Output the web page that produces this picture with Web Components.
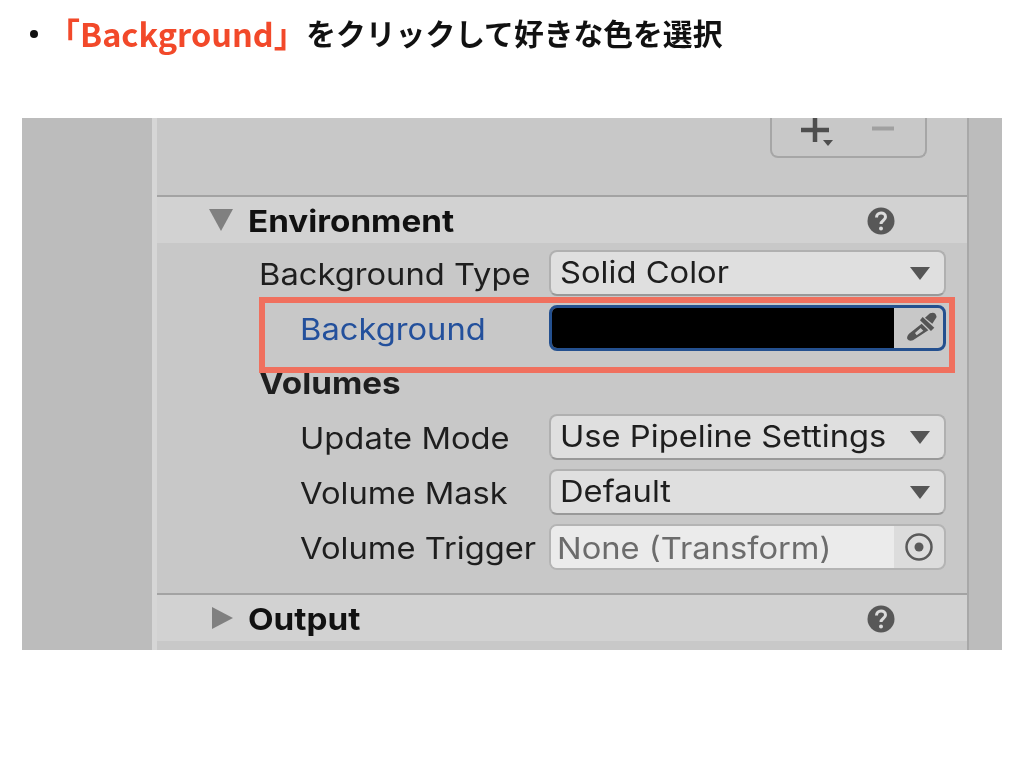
<!DOCTYPE html>
<html lang="ja">
<head>
<meta charset="utf-8">
<title>Background</title>
<style>
  html, body { margin: 0; background: #fff; }
  body { width: 1024px; height: 768px; overflow: hidden; }
</style>
</head>
<body>
<bullet-note><em>「Background」</em>をクリックして好きな色を選択</bullet-note>
<inspector-shot>
  <list-buttons slot="top"></list-buttons>
  <fold-header open>Environment</fold-header>
  <field-list>
    <field-row label="Background Type"><popup-field>Solid Color</popup-field></field-row>
    <field-row label="Background" indent accent><color-field></color-field></field-row>
    <field-row label="Volumes" strong></field-row>
    <field-row label="Update Mode" indent><popup-field>Use Pipeline Settings</popup-field></field-row>
    <field-row label="Volume Mask" indent><popup-field>Default</popup-field></field-row>
    <field-row label="Volume Trigger" indent><object-field>None (Transform)</object-field></field-row>
    <red-outline></red-outline>
  </field-list>
  <fold-header>Output</fold-header>
</inspector-shot>

<script>
const FONT = '"Inter", "Liberation Sans", sans-serif';
// the reference is a screenshot stretched sideways, so its text is wider than tall
const STRETCH = 'display: inline-block; transform: scaleX(1.09); transform-origin: 0 50%; white-space: nowrap;';

function define(name, html) {
  customElements.define(name, class extends HTMLElement {
    connectedCallback() {
      if (this.shadowRoot) return;
      this.attachShadow({ mode: 'open' }).innerHTML = typeof html === 'function' ? html(this) : html;
    }
  });
}

define('bullet-note', `
  <style>
    :host {
      display: flex;
      align-items: center;
      height: 66px;
      padding-left: 30px;
      font: 700 29.800px/1 "Noto Sans CJK JP", "Liberation Sans", sans-serif;
      color: #111;
      filter: blur(.45px);
    }
    .dot { width: 8px; height: 8px; border-radius: 50%; background: #111; margin-right: 9.500px; margin-top: 2px; }
    ::slotted(em) { font-style: normal; font-size: 32.500px; color: #f2492a; }
  </style>
  <span class="dot"></span><slot></slot>`);

define('inspector-shot', `
  <style>
    :host {
      display: grid;
      grid-template-columns: 130px 5px 810px 2px 33px;
      width: 980px;
      height: 532px;
      margin: 52px 0 0 22px;
      background: #c8c8c8;
      overflow: hidden;
      font-family: ${FONT};
      filter: blur(.6px);
    }
    .gutter { background: #bcbcbc; }
    .edge { background: #d6d6d6; }
    .rule { background: #a8a8a8; }
    .main { display: flex; flex-direction: column; min-width: 0; }
    .top { height: 77px; display: flex; justify-content: flex-end; padding-right: 40px; box-sizing: border-box; }
  </style>
  <div class="gutter"></div>
  <div class="edge"></div>
  <div class="main">
    <div class="top"><slot name="top"></slot></div>
    <slot></slot>
  </div>
  <div class="rule"></div>
  <div class="gutter"></div>`);

define('list-buttons', `
  <style>
    :host {
      display: block;
      width: 157px;
      height: 40px;
      box-sizing: border-box;
      border: 2px solid #a6a6a6;
      border-top: 0;
      border-radius: 0 0 8px 8px;
    }
    svg { display: block; }
  </style>
  <svg width="153" height="38" viewBox="0 0 153 38">
    <path d="M29 12h28M43 0v24" stroke="#4e4e4e" stroke-width="4.500" fill="none"/>
    <path d="M51 22h10l-5 6z" fill="#4e4e4e"/>
    <path d="M100 10.500h22" stroke="#a0a0a0" stroke-width="4" fill="none"/>
  </svg>`);

define('fold-header', (el) => `
  <style>
    :host {
      display: flex;
      align-items: center;
      height: 48px;
      box-sizing: border-box;
      border-top: 2px solid #a3a3a3;
      background: #d2d2d2;
      padding: 0 72px 0 52px;
      font: 700 30.500px/1 ${FONT};
      color: #111;
    }
    .arrow { width: 39px; flex: none; display: block; }
    .label { flex: 1; min-width: 0; margin-top: 2px; }
    .label span { ${STRETCH} }
    .help { width: 28px; height: 28px; flex: none; display: block; margin-top: 2px; }
  </style>
  <svg class="arrow" width="39" height="24" viewBox="0 0 39 24">
    ${el.hasAttribute('open')
      ? '<path d="M0 1h24L12 23z" fill="#808080"/>'
      : '<path d="M3 1l21 11L3 23z" fill="#808080"/>'}
  </svg>
  <div class="label"><span><slot></slot></span></div>
  <svg class="help" viewBox="0 0 28 28">
    <circle cx="14" cy="14" r="13.500" fill="#585858"/>
    <path d="M9.500 10.500c0-6 9-6 9-.5 0 3.500-4.500 3.500-4.500 7" fill="none" stroke="#dcdcdc" stroke-width="3"/>
    <circle cx="14" cy="21.500" r="2" fill="#dcdcdc"/>
  </svg>`);

define('field-list', `
  <style>
    :host {
      display: flex;
      flex-direction: column;
      gap: 8.800px;
      position: relative;
      height: 350px;
      box-sizing: border-box;
      padding: 7px 21px 0 0;
    }
  </style>
  <slot></slot>`);

define('field-row', (el) => `
  <style>
    :host {
      display: grid;
      grid-template-columns: 392px 397px;
      height: 46px;
      align-items: center;
      font: ${el.hasAttribute('strong') ? 700 : 400} ${el.hasAttribute('strong') ? 30.5 : 30}px/1 ${FONT};
      color: ${el.hasAttribute('accent') ? '#23509c' : '#1e1e1e'};
    }
    .label { padding-left: ${el.hasAttribute('indent') ? 143 : 102}px; margin-top: 2px; }
    .label span { ${STRETCH} }
  </style>
  <div class="label"><span>${el.getAttribute('label')}</span></div><slot></slot>`);

const controlBox = `
  display: flex;
  align-items: center;
  height: 46px;
  box-sizing: border-box;
  border-radius: 8px;
  overflow: hidden;
  color: #1e1e1e;`;

define('popup-field', `
  <style>
    :host {${controlBox}
      background: #dfdfdf;
      border: 2px solid #b0b0b0;
      border-bottom-color: #999;
      padding: 0 14px 0 9px;
      justify-content: space-between;
    }
    .text { ${STRETCH} margin-top: -2px; }
    svg { display: block; flex: none; }
  </style>
  <span class="text"><slot></slot></span>
  <svg width="20" height="13" viewBox="0 0 20 13"><path d="M0 0h20L10 13z" fill="#555"/></svg>`);

define('color-field', `
  <style>
    :host {${controlBox}
      border: 3px solid #24508f;
      background: #c8c8c8;
    }
    .swatch { flex: 1; align-self: stretch; background: #000; }
    .pick { width: 49px; display: flex; justify-content: center; padding-left: 6px; box-sizing: border-box; }
    svg { display: block; }
  </style>
  <div class="swatch"></div>
  <div class="pick">
    <svg width="33.300" height="33.300" viewBox="80 50 100 100">
      <path d="M140 70L155 57Q172 50 175 68L162 88Z" fill="#555"/>
      <path d="M125 78L133 68L168 100L158 110Z" fill="#555"/>
      <path d="M130 88L150 108L104 138Q92 142 87 134Q84 128 92 118ZM127 101L135 109L115 123L110 116Z" fill="#555" fill-rule="evenodd"/>
    </svg>
  </div>`);

define('object-field', `
  <style>
    :host {${controlBox}
      border: 2px solid #b4b4b4;
      background: #dcdcdc;
    }
    .value { flex: 1; min-width: 0; align-self: stretch; display: flex; align-items: center; padding-left: 6px; background: #ebebeb; color: #6c6c6c; }
    .value span { ${STRETCH} margin-top: 2px; }
    .pick { width: 50px; display: flex; justify-content: center; }
    svg { display: block; }
  </style>
  <div class="value"><span><slot></slot></span></div>
  <div class="pick">
    <svg width="30" height="30" viewBox="0 0 30 30">
      <circle cx="15" cy="15" r="12.500" fill="none" stroke="#5a5a5a" stroke-width="2.500"/>
      <circle cx="15" cy="15" r="4.500" fill="#5a5a5a"/>
    </svg>
  </div>`);

// the annotation drawn over the screenshot
define('red-outline', `
  <style>
    :host {
      position: absolute;
      left: 102px;
      top: 54px;
      width: 696px;
      height: 76px;
      box-sizing: border-box;
      border: 6px solid #f0705e;
    }
  </style>`);
</script>
</body>
</html>
